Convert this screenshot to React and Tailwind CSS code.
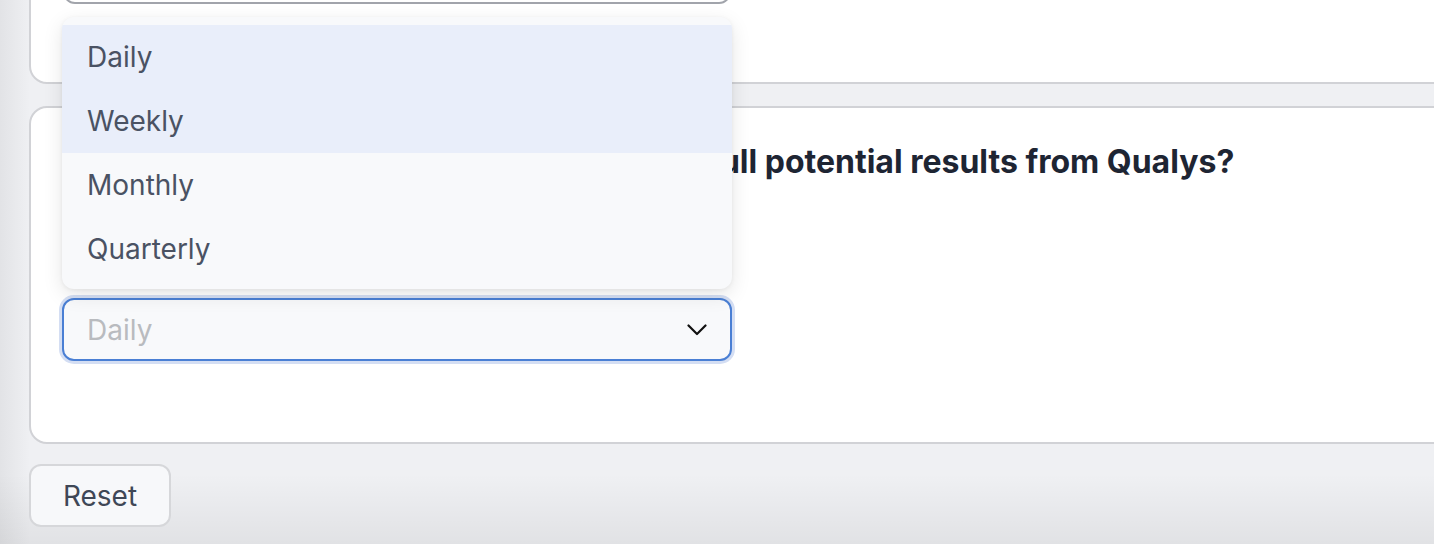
import React from "react";

function Chevron() {
  return (
    <svg width="20" height="12" viewBox="0 0 20 12" fill="none" className="block">
      <path d="M1.5 1.5 L10 10 L18.5 1.5" stroke="#111" strokeWidth="2.2" strokeLinecap="round" strokeLinejoin="round" />
    </svg>
  );
}

export default function App() {
  const items = [
    { label: "Daily", active: true },
    { label: "Weekly", active: true },
    { label: "Monthly", active: false },
    { label: "Quarterly", active: false },
  ];
  return (
    <div
      className="w-[1434px] h-[544px] overflow-hidden bg-[#eff0f3] bg-[linear-gradient(to_top,rgba(0,0,0,0.06),rgba(0,0,0,0)_70px),linear-gradient(to_right,#e2e3e6,#eff0f3_30px)]"
      style={{ fontFamily: "Inter, 'Noto Sans', sans-serif" }}
    >
      <div className="pl-[29px] -mt-[94px] flex flex-col w-[1460px]">
        {/* Card 1 (mostly above the viewport) */}
        <div className="border-2 border-[#d1d2d6] rounded-[18px] bg-white px-[32px] pt-[32px] pb-[78px]">
          <div className="w-[668px] h-[64px] border-2 border-[#a1a4ab] rounded-[12px] bg-white" />
        </div>

        {/* Card 2 */}
        <div className="mt-[22px] border-2 border-[#d1d2d6] rounded-[18px] bg-white pl-[31px] pr-[32px] pt-[32px] pb-[81px]">
          <h2 className="text-[32px] leading-[44px] font-bold text-[#1e2533] whitespace-nowrap">
            How frequently should we send you your full potential results from Qualys?
          </h2>
          <div className="relative mt-[114px] w-[670px]">
            <div className="absolute left-0 right-0 bottom-full mb-[9px] z-10 rounded-[12px] bg-[#f8f9fb] py-[8px] shadow-[0_6px_20px_rgba(0,0,0,0.10),0_1px_4px_rgba(0,0,0,0.06)] overflow-hidden">
              {items.map((it) => (
                <div
                  key={it.label}
                  className={
                    "h-[64px] flex items-center pl-[25px] text-[28px] text-[#4a5263] " +
                    (it.active ? "bg-[#e9eefa]" : "")
                  }
                >
                  {it.label}
                </div>
              ))}
            </div>
            <div className="h-[63px] w-[670px] border-2 border-[#4a7fd4] rounded-[12px] bg-[#f8f9fb] shadow-[0_0_0_3px_#d4def3] flex items-center justify-between pl-[23px] pr-[23px]">
              <span className="text-[28px] text-[#b9bbbf]">Daily</span>
              <Chevron />
            </div>
          </div>
        </div>

        {/* Reset */}
        <div className="flex mt-[20px]">
          <button className="w-[142px] h-[63px] border-2 border-[#d6d7da] rounded-[12px] bg-[#f7f8fa] text-[28px] text-[#3f4756] flex items-center justify-center">
            Reset
          </button>
        </div>
      </div>
    </div>
  );
}
